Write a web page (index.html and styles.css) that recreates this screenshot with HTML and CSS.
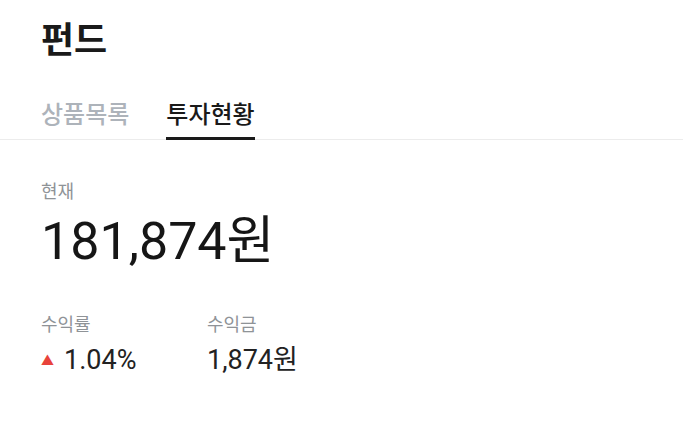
FILE: index.html
```html
<!DOCTYPE html>
<html lang="ko">
<head>
    <meta charset="UTF-8">
    <meta name="viewport" content="width=device-width, initial-scale=1.0">
    <title>펀드</title>
    <link rel="stylesheet" href="styles.css">
</head>
<body>
    <div class="page">
        <h1 class="title">펀드</h1>
        <div class="tabs">
            <button class="tab">상품목록</button>
            <button class="tab active">투자현황</button>
        </div>
        <div class="summary">
            <div class="label">현재</div>
            <div class="total">181,874원</div>
            <div class="stats">
                <div class="stat">
                    <div class="label">수익률</div>
                    <div class="value"><span class="up">▲</span>1.04%</div>
                </div>
                <div class="stat">
                    <div class="label">수익금</div>
                    <div class="value">1,874원</div>
                </div>
            </div>
        </div>
    </div>
</body>
</html>
```

FILE: styles.css
```css
body {
    margin: 0;
    font-family: Roboto, "Noto Sans CJK KR", sans-serif;
    background-color: #fff;
    color: #1a1a1a;
}

.title {
    margin: 0;
    padding: 17px 0 0 41px;
    font-size: 36px;
    font-weight: 700;
    line-height: 48px;
}

.tabs {
    display: flex;
    gap: 37px;
    margin-top: 34px;
    padding-left: 41px;
    border-bottom: 1px solid #ececec;
}

.tab {
    padding: 0 0 6px;
    margin-bottom: -1px;
    background: none;
    border: none;
    border-bottom: 3px solid transparent;
    font-family: inherit;
    font-size: 24px;
    font-weight: 500;
    line-height: 32px;
    color: #adb3ba;
}

.tab.active {
    color: #1a1a1a;
    border-bottom-color: #1a1a1a;
}

.summary {
    padding: 40px 0 0 41px;
}

.label {
    font-size: 18px;
    line-height: 24px;
    color: #8f9397;
}

.total {
    margin-top: 10px;
    font-size: 52px;
    line-height: 56px;
    color: #161616;
}

.stats {
    display: flex;
    margin-top: 43px;
}

.stat {
    width: 166px;
}

.value {
    margin-top: 6px;
    font-size: 27px;
    line-height: 34px;
    color: #222;
}

.up {
    display: inline-block;
    margin-right: 10px;
    font-size: 13px;
    vertical-align: 4px;
    color: #e8433b;
}
```
